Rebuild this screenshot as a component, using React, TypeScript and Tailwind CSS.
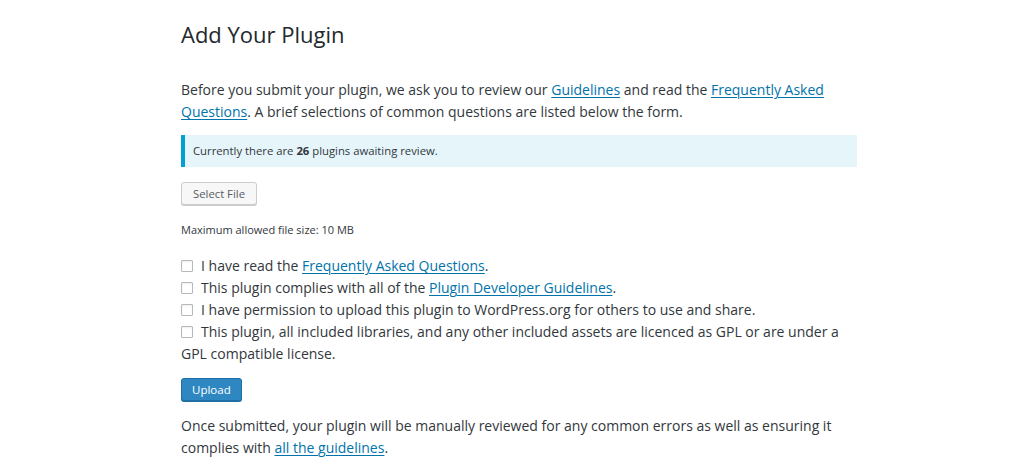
import React from "react";

const A = ({ children }: { children: React.ReactNode }) => (
  <a href="#" className="text-[#0073aa] underline underline-offset-2 decoration-1">
    {children}
  </a>
);

const Check = ({ children }: { children: React.ReactNode }) => (
  <label className="block">
    <span className="inline-block w-[12px] h-[12px] border border-[#b4b9be] bg-white rounded-[1px] mr-[8px] align-[-1px] shadow-[inset_0_1px_2px_rgba(0,0,0,0.07)]" />
    {children}
  </label>
);

export default function App() {
  return (
    <div className="min-h-[473px] bg-white text-[#32373c] font-['Open_Sans',sans-serif]">
      <div className="pl-[181px] w-[857px]">
        <h1 className="text-[22px] leading-[28px] pt-[20px] font-normal text-[#23282d]">Add Your Plugin</h1>
        <p className="mt-[31px] text-[14px] leading-[22px]">
          Before you submit your plugin, we ask you to review our <A>Guidelines</A> and read the <A>Frequently Asked Questions</A>. A brief selections of common questions are listed below the form.
        </p>
        <div className="mt-[12px] h-[32px] flex items-center bg-[#e5f5fa] border-l-4 border-[#00a0d2] pl-[8px] text-[11.3px]">
          <span>
            Currently there are <strong className="font-bold">26</strong> plugins awaiting review.
          </span>
        </div>
        <button className="mt-[15px] h-[23px] px-[11px] text-[11.3px] bg-[#f7f7f7] border border-[#cccccc] rounded-[3px] shadow-[0_1px_0_#cccccc] text-[#555d66] leading-[20px]">
          Select File
        </button>
        <p className="mt-[17px] text-[11px] leading-[16px]">Maximum allowed file size: 10 MB</p>
        <div className="mt-[17px] text-[14px] leading-[22px]">
          <Check>I have read the <A>Frequently Asked Questions</A>.</Check>
          <Check>This plugin complies with all of the <A>Plugin Developer Guidelines</A>.</Check>
          <Check>I have permission to upload this plugin to WordPress.org for others to use and share.</Check>
          <Check>This plugin, all included libraries, and any other included assets are licenced as GPL or are under a GPL compatible license.</Check>
        </div>
        <button className="mt-[13px] h-[23px] px-[10px] text-[11.5px] bg-[#2f87c2] border border-[#1f6fa6] rounded-[3px] text-white leading-[20px] shadow-[0_1px_0_#1f6fa6]">
          Upload
        </button>
        <p className="mt-[14px] text-[14px] leading-[22px]">
          Once submitted, your plugin will be manually reviewed for any common errors as well as ensuring it complies with <A>all the guidelines</A>.
        </p>
      </div>
    </div>
  );
}
